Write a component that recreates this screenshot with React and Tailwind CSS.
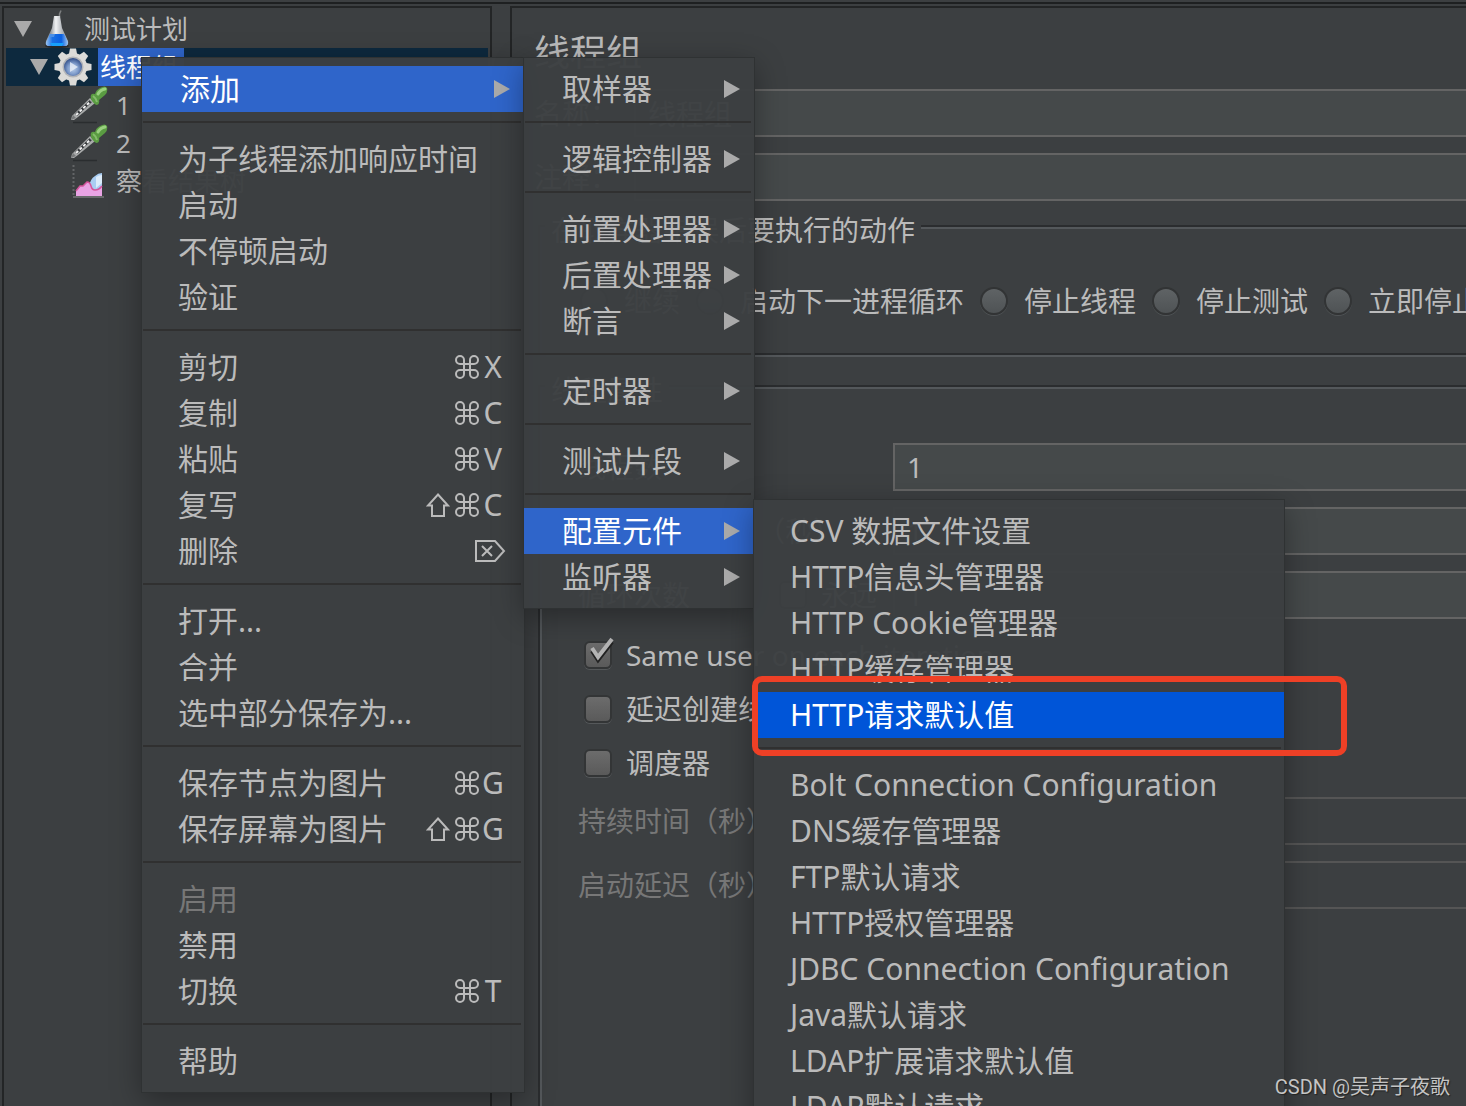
import { useState } from "react";
import clsx from "clsx";

const ADD_MENU = [
  { label: "添加", submenu: true, active: true },
  null,
  { label: "为子线程添加响应时间" },
  { label: "启动" },
  { label: "不停顿启动" },
  { label: "验证" },
  null,
  { label: "剪切", keys: ["cmd", "X"] },
  { label: "复制", keys: ["cmd", "C"] },
  { label: "粘贴", keys: ["cmd", "V"] },
  { label: "复写", keys: ["shift", "cmd", "C"] },
  { label: "删除", keys: ["del"] },
  null,
  { label: "打开..." },
  { label: "合并" },
  { label: "选中部分保存为..." },
  null,
  { label: "保存节点为图片", keys: ["cmd", "G"] },
  { label: "保存屏幕为图片", keys: ["shift", "cmd", "G"] },
  null,
  { label: "启用", disabled: true },
  { label: "禁用" },
  { label: "切换", keys: ["cmd", "T"] },
  null,
  { label: "帮助" },
];

const TYPE_MENU = [
  { label: "取样器", submenu: true },
  null,
  { label: "逻辑控制器", submenu: true },
  null,
  { label: "前置处理器", submenu: true },
  { label: "后置处理器", submenu: true },
  { label: "断言", submenu: true },
  null,
  { label: "定时器", submenu: true },
  null,
  { label: "测试片段", submenu: true },
  null,
  { label: "配置元件", submenu: true, active: true },
  { label: "监听器", submenu: true },
];

const CONFIG_MENU = [
  { label: "CSV 数据文件设置" },
  { label: "HTTP信息头管理器" },
  { label: "HTTP Cookie管理器" },
  { label: "HTTP缓存管理器" },
  { label: "HTTP请求默认值", picked: true },
  null,
  { label: "Bolt Connection Configuration" },
  { label: "DNS缓存管理器" },
  { label: "FTP默认请求" },
  { label: "HTTP授权管理器" },
  { label: "JDBC Connection Configuration" },
  { label: "Java默认请求" },
  { label: "LDAP扩展请求默认值" },
  { label: "LDAP默认请求" },
];

const ERROR_ACTIONS = [
  "继续",
  "启动下一进程循环",
  "停止线程",
  "停止测试",
  "立即停止测试",
];

function FlaskIcon() {
  return (
    <svg width="38" height="38" viewBox="0 0 38 38">
      <defs>
        <linearGradient id="glass" x1="0" x2="1">
          <stop offset="0.2" stopColor="#8b9096" />
          <stop offset="0.45" stopColor="#f1f2f3" />
          <stop offset="0.8" stopColor="#a3a8ae" />
        </linearGradient>
        <linearGradient id="liquid" x1="0" x2="1">
          <stop offset="0" stopColor="#9cc4f0" />
          <stop offset="0.3" stopColor="#1a70e4" />
          <stop offset="0.7" stopColor="#0a5fe0" />
          <stop offset="1" stopColor="#9cc4f0" />
        </linearGradient>
      </defs>
      <ellipse cx="19" cy="36" rx="12" ry="2" fill="#25282a" />
      <path d="M21.500 7V4L23 0.500" stroke="#7d7f80" strokeWidth="1.500" fill="none" />
      <path d="M16 6h6l2 12 6 13q1 5-3 5H11q-4 0-3-5l6-13z" fill="url(#glass)" />
      <path d="M12 24h14l4 8q0 4-3 4H11q-4 0-3-4z" fill="url(#liquid)" />
      <path d="M12 24h5l-1 3h-5z" fill="#4b8fe6" />
      <path d="M12 33h14l-2 3H14z" fill="#18a0fa" />
    </svg>
  );
}

function GearIcon() {
  return (
    <svg width="38" height="38" viewBox="0 0 38 38">
      <defs>
        <radialGradient id="hub" cx="0.5" cy="0.6" r="0.6">
          <stop offset="0" stopColor="#b9cee9" />
          <stop offset="0.5" stopColor="#7f9ccb" />
          <stop offset="1" stopColor="#2d4a85" />
        </radialGradient>
      </defs>
      <g fill="#dcdbd8">
        <circle cx="19" cy="19" r="14" />
        {[0, 45, 90, 135, 180, 225, 270, 315].map((angle) => (
          <path
            key={angle}
            d="M14.500 8 16 0.500h6L23.500 8z"
            transform={`rotate(${angle} 19 19)`}
          />
        ))}
      </g>
      <circle cx="19" cy="19" r="10.500" fill="#b2b4b8" />
      <circle cx="19" cy="19" r="9" fill="url(#hub)" />
      <path d="M16 14 24 19l-8 5z" fill="#e8eff7" opacity="0.8" />
    </svg>
  );
}

function DropperIcon() {
  return (
    <svg width="38" height="38" viewBox="0 0 38 38">
      <path d="M3 36.500h24" stroke="#2a2d2f" strokeWidth="1.500" />
      <path d="M1 34l1-4L20 12l5 5L8 31l-4 3z" fill="#a9abab" />
      <path d="M6 29 21 15" stroke="#34373a" strokeWidth="3" />
      <path d="M6 29 21 15" stroke="#f2f2f2" strokeWidth="2" strokeDasharray="3 2" />
      <path d="M1 34l2-5 3 3z" fill="#77797a" />
      <path
        d="M21 9q1-2 4-1 1-4 5-6 5-3 7 0 1 4-2 7l-6 5q1 4-2 5-2 0-5-4-2-3-1-6z"
        fill="#5a9c42"
      />
      <path d="M28 8q2-4 7-5" stroke="#9ad080" strokeWidth="3" strokeLinecap="round" fill="none" />
      <path d="M23 10q3 2 4 6" stroke="#86bd6c" strokeWidth="2" fill="none" />
    </svg>
  );
}

function ChartIcon() {
  return (
    <svg width="38" height="38" viewBox="0 0 38 38">
      <path d="M3.500 3v32" stroke="#626567" strokeWidth="2" strokeDasharray="2 2" />
      <path d="M3 35h31" stroke="#77797a" strokeWidth="1.500" />
      <path d="M19 25q1-8 6-11 3-3 7-3v14l-7 5z" fill="#a9cdf2" />
      <path d="M26 15q3-2 6-2v8l-6 5z" fill="#dcecfb" />
      <path d="M6 34v-5l4-5h3l4-4q3 0 4 4 1 4 4 4 4 0 7-4v10z" fill="#e9a3e4" />
      <path
        d="M6 29l4-5h3l4-4q3 0 4 4 1 4 4 4 4 0 7-4"
        stroke="#d4559c"
        strokeWidth="1.500"
        fill="none"
      />
    </svg>
  );
}

function KeyGlyph({ name }) {
  if (name === "cmd") {
    return (
      <svg width="24" height="24" viewBox="0 0 24 24" fill="none" stroke="currentColor" strokeWidth="2">
        <path d="M9 5a4 4 0 1 0-4 4h14a4 4 0 1 0-4-4v14a4 4 0 1 0 4-4H5a4 4 0 1 0 4 4z" />
      </svg>
    );
  }
  if (name === "shift") {
    return (
      <svg className="mr-0.5" width="24" height="24" viewBox="0 0 24 24" fill="none" stroke="currentColor" strokeWidth="2">
        <path d="M12 1.500 22 12.500h-4V23H6V12.500H2z" />
      </svg>
    );
  }
  if (name === "del") {
    return (
      <svg className="-mr-0.5" width="32" height="24" viewBox="0 0 32 24" fill="none" stroke="currentColor" strokeWidth="2">
        <path d="M2 2h19l9 10-9 10H2zM8 7l10 10M18 7 8 17" />
      </svg>
    );
  }
  return <span className="w-[22px] text-center">{name}</span>;
}

function MenuItem({ item }) {
  return (
    <li role="none">
      <button
        type="button"
        role="menuitem"
        disabled={item.disabled}
        className={clsx(
          "flex h-[46px] w-full items-center justify-between text-left whitespace-nowrap",
          item.submenu ? "pr-3.5 pl-[38px]" : "pr-5 pl-9",
          item.active && "bg-[#2f65ca]",
          item.picked && "bg-[#0055d8]",
          item.disabled && "text-[#777777]",
        )}
      >
        <span className={clsx((item.active || item.picked) && "text-white")}>
          {item.label}
        </span>
        {item.submenu && (
          <svg width="16" height="18" viewBox="0 0 16 18" fill="#aaaaaa">
            <path d="M0 0 16 9 0 18z" />
          </svg>
        )}
        {item.keys && (
          <kbd className="flex items-center gap-[3px] font-[inherit]">
            {item.keys.map((key) => (
              <KeyGlyph key={key} name={key} />
            ))}
          </kbd>
        )}
      </button>
    </li>
  );
}

function Menu({ items, className }) {
  return (
    <ul
      role="menu"
      className={clsx(
        "absolute bg-[#3c3f41]/97 py-2 text-[30px] leading-[46px] text-[#bbbbbb] shadow-[0_0_0_1px_#2f3233,0_8px_28px_rgba(0,0,0,0.35)]",
        className,
      )}
    >
      {items.map((item, i) =>
        item ? (
          <MenuItem key={item.label} item={item} />
        ) : (
          <li key={i} role="separator" className="mr-[3px] ml-px h-6 pt-[9px]">
            <div className="h-0.5 bg-[#303030]" />
          </li>
        ),
      )}
    </ul>
  );
}

function TreeRow({ icon, label, indent, open, selected }) {
  return (
    <li
      role="treeitem"
      aria-selected={!!selected}
      className={clsx(
        "flex h-[38px] items-center gap-1.5",
        indent,
        selected && "bg-[#0d293e]",
      )}
    >
      {open && (
        <svg width="18" height="16" viewBox="0 0 18 16" fill="#aaaaaa">
          <path d="M0 0h18L9 16z" />
        </svg>
      )}
      {icon}
      <span
        className={clsx(
          "h-full pr-1.5 pl-0.5 leading-[38px]",
          selected && "bg-[#2f65ca] text-white",
        )}
      >
        {label}
      </span>
    </li>
  );
}

function Field({ id, label, value, labelClass, disabled, children }) {
  const [text, setText] = useState(value || "");
  return (
    <div className="flex h-12 items-center">
      <div className={clsx("flex shrink-0 items-center", labelClass)}>
        <label htmlFor={id} className={clsx(disabled && "text-[#777777]")}>
          {label}
        </label>
        {children}
      </div>
      <input
        id={id}
        value={text}
        disabled={disabled}
        onChange={(e) => setText(e.target.value)}
        className={clsx(
          "h-12 min-w-0 flex-1 border-2 px-3 outline-none",
          disabled ? "border-[#555555]" : "border-[#646464] bg-[#45494a]",
        )}
      />
    </div>
  );
}

function Check({ label, defaultChecked }) {
  const [checked, setChecked] = useState(!!defaultChecked);
  return (
    <label className="flex items-center gap-3.5 whitespace-nowrap">
      <span className="relative flex size-7">
        <input
          type="checkbox"
          checked={checked}
          onChange={(e) => setChecked(e.target.checked)}
          className="size-7 appearance-none rounded-md border-2 border-[#333536] bg-linear-to-b from-[#6c6c6c] to-[#5a5a5a] shadow-[0_1px_0_#55585a]"
        />
        {checked && (
          <svg
            className="pointer-events-none absolute -top-1 left-1"
            width="28"
            height="30"
            viewBox="0 0 28 30"
            fill="none"
            strokeWidth="4"
          >
            <path d="M4 14l6 9L24 5" stroke="#222222" />
            <path d="M4 11l6 9L24 2" stroke="#b4b4b4" />
          </svg>
        )}
      </span>
      {label}
    </label>
  );
}

// etched border: dark line with a light one just outside/inside of it
function Group({ title, className, children }) {
  return (
    <fieldset
      className={clsx(
        "ml-[26px] border-2 border-[#2b2d2f] px-[5px] shadow-[2px_2px_0_#54585b,inset_2px_2px_0_#54585b]",
        className,
      )}
    >
      <legend className="bg-[#3c3f41] px-1.5 pt-2 leading-8">{title}</legend>
      {children}
    </fieldset>
  );
}

function ThreadGroupForm() {
  const [action, setAction] = useState("继续");

  return (
    <main className="min-w-0 flex-1 overflow-hidden border-t-2 border-l-2 border-[#232526]">
      <form className="-mr-6 text-[28px]">
        <h1 className="flex h-[81px] items-center pt-2 pl-[22px] text-4xl">线程组</h1>
        <div className="flex flex-col gap-4 pl-[22px]">
          <Field id="name" label="名称：" value="线程组" labelClass="w-[100px]" />
          <Field id="comment" label="注释：" labelClass="w-[100px]" />
        </div>

        <Group title="在取样器错误后要执行的动作" className="mt-[5px]">
          <div className="flex h-[107px] items-center gap-4 pt-0.5 pl-[35px]">
            {ERROR_ACTIONS.map((name) => (
              <label key={name} className="flex shrink-0 items-center gap-4">
                <input
                  type="radio"
                  name="action"
                  checked={action === name}
                  onChange={() => setAction(name)}
                  className="size-7 appearance-none rounded-full border-2 border-[#323435] bg-linear-to-b from-[#5f6365] to-[#4f5355] shadow-[0_1px_0_#505456]"
                />
                {name}
              </label>
            ))}
          </div>
        </Group>

        <Group title="线程属性" className="mt-[11px] h-[900px]">
          <div className="flex flex-col gap-4 pt-[37px] pl-[33px]">
            <Field id="threads" label="线程数" value="1" labelClass="w-[315px]" />
            <Field
              id="ramp"
              label="Ramp-Up时间（秒）"
              value="1"
              labelClass="w-[315px]"
            />
            <Field
              id="loops"
              label="循环次数"
              value="1"
              labelClass="w-[315px] justify-between pr-4"
            >
              <Check label="永远" />
            </Field>
          </div>
          <div className="my-2 pl-[39px]">
            <div className="flex h-[54px] items-center pt-px">
              <Check label="Same user on each iteration" defaultChecked />
            </div>
            <div className="flex h-[54px] items-center pt-px">
              <Check label="延迟创建线程直到需要" />
            </div>
            <div className="flex h-[54px] items-center pt-px">
              <Check label="调度器" />
            </div>
          </div>
          <div className="flex flex-col gap-4 pl-[33px]">
            <Field id="duration" label="持续时间（秒）" labelClass="w-[315px]" disabled />
            <Field id="delay" label="启动延迟（秒）" labelClass="w-[315px]" disabled />
          </div>
        </Group>
      </form>
    </main>
  );
}

export default function App() {
  return (
    <div className="relative flex h-screen flex-col overflow-hidden bg-[#3c3f41] pt-0.5 font-['Noto_Sans','Noto_Sans_CJK_SC',sans-serif] text-[#bbbbbb]">
      <div className="h-0.5 shrink-0 bg-[#1e2021]" />
      <div className="mt-0.5 flex min-h-0 flex-1 gap-[18px] pl-0.5">
        <nav className="w-[490px] shrink-0 border-2 border-b-0 border-[#232526] p-0.5 text-[26px]">
          <ul role="tree">
            <TreeRow icon={<FlaskIcon />} label="测试计划" indent="pl-2" open />
            <TreeRow icon={<GearIcon />} label="线程组" indent="pl-6" open selected />
            <TreeRow icon={<DropperIcon />} label="1" indent="pl-16" />
            <TreeRow icon={<DropperIcon />} label="2" indent="pl-16" />
            <TreeRow icon={<ChartIcon />} label="察看结果树" indent="pl-16" />
          </ul>
        </nav>
        <ThreadGroupForm />
      </div>

      <Menu items={ADD_MENU} className="top-[58px] left-[142px] w-[382px]" />
      <Menu items={TYPE_MENU} className="top-[58px] left-[524px] w-[230px]" />
      <Menu items={CONFIG_MENU} className="top-[500px] left-[754px] w-[530px]" />

      {/* highlight around the picked entry */}
      <div className="pointer-events-none absolute top-[676px] left-[752px] h-20 w-[595px] rounded-[10px] border-6 border-[#ee4026]" />

      <p className="absolute right-4 bottom-[5px] font-[Roboto,'Noto_Sans_CJK_SC',sans-serif] text-xl text-[#c4c4c4] [text-shadow:1px_1px_1px_#222]">
        CSDN @吴声子夜歌
      </p>
    </div>
  );
}
